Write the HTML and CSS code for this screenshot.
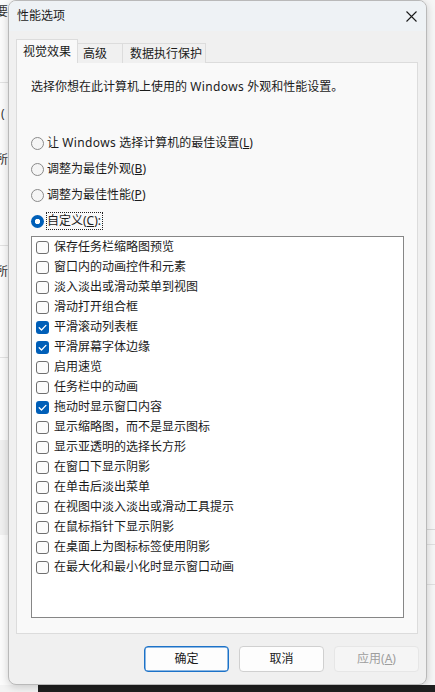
FILE: index.html
```html
<!DOCTYPE html>
<html lang="zh-CN">
<head>
<meta charset="utf-8">
<title>性能选项</title>
<link rel="stylesheet" href="styles.css">
</head>
<body>
<div class="desktop">
  <div class="bgwin">
    <span class="frag frag-1">要</span>
    <span class="frag frag-2">(</span>
    <span class="frag frag-3">所</span>
    <span class="frag frag-4">所</span>
    <div class="bgline bgline-1"></div>
    <div class="bgline bgline-2"></div>
    <div class="bgline bgline-3"></div>
    <div class="bgband"></div>
  </div>
  <div class="rightwin">
    <div class="rline rline-1"></div>
    <div class="rline rline-2"></div>
    <div class="rline rline-3"></div>
  </div>
  <div class="taskbar"></div>

  <div class="dialog">
    <div class="titlebar">
      <span class="title">性能选项</span>
      <span class="close">
        <svg width="11" height="11" viewBox="0 0 11 11"><path d="M0.5 0.5 L10.5 10.5 M10.5 0.5 L0.5 10.5" stroke="#1a1a1a" stroke-width="1.1" fill="none"/></svg>
      </span>
    </div>

    <div class="content">
      <div class="tabs">
        <div class="tab tab-active tab-1">视觉效果</div>
        <div class="tab tab-2">高级</div>
        <div class="tab tab-3">数据执行保护</div>
      </div>
      <div class="panel">
        <p class="desc">选择你想在此计算机上使用的 <span class="lat">Windows</span> 外观和性能设置。</p>
        <div class="radios">
          <div class="radio-row"><span class="radio"></span><span>让 <span class="lat">Windows</span> 选择计算机的最佳设置(<u>L</u>)</span></div>
          <div class="radio-row"><span class="radio"></span><span>调整为最佳外观(<u>B</u>)</span></div>
          <div class="radio-row"><span class="radio"></span><span>调整为最佳性能(<u>P</u>)</span></div>
          <div class="radio-row"><span class="radio radio-on"></span><span class="focus">自定义(<u>C</u>):</span></div>
        </div>
        <div class="list">
          <div class="item"><span class="cb"></span>保存任务栏缩略图预览</div>
          <div class="item"><span class="cb"></span>窗口内的动画控件和元素</div>
          <div class="item"><span class="cb"></span>淡入淡出或滑动菜单到视图</div>
          <div class="item"><span class="cb"></span>滑动打开组合框</div>
          <div class="item"><span class="cb cb-on"><svg width="13" height="13" viewBox="0 0 13 13"><path d="M3.2 6.8 L5.5 9 L9.9 4.4" stroke="#fff" stroke-width="1.3" fill="none" stroke-linecap="round" stroke-linejoin="round"/></svg></span>平滑滚动列表框</div>
          <div class="item"><span class="cb cb-on"><svg width="13" height="13" viewBox="0 0 13 13"><path d="M3.2 6.8 L5.5 9 L9.9 4.4" stroke="#fff" stroke-width="1.3" fill="none" stroke-linecap="round" stroke-linejoin="round"/></svg></span>平滑屏幕字体边缘</div>
          <div class="item"><span class="cb"></span>启用速览</div>
          <div class="item"><span class="cb"></span>任务栏中的动画</div>
          <div class="item"><span class="cb cb-on"><svg width="13" height="13" viewBox="0 0 13 13"><path d="M3.2 6.8 L5.5 9 L9.9 4.4" stroke="#fff" stroke-width="1.3" fill="none" stroke-linecap="round" stroke-linejoin="round"/></svg></span>拖动时显示窗口内容</div>
          <div class="item"><span class="cb"></span>显示缩略图，而不是显示图标</div>
          <div class="item"><span class="cb"></span>显示亚透明的选择长方形</div>
          <div class="item"><span class="cb"></span>在窗口下显示阴影</div>
          <div class="item"><span class="cb"></span>在单击后淡出菜单</div>
          <div class="item"><span class="cb"></span>在视图中淡入淡出或滑动工具提示</div>
          <div class="item"><span class="cb"></span>在鼠标指针下显示阴影</div>
          <div class="item"><span class="cb"></span>在桌面上为图标标签使用阴影</div>
          <div class="item"><span class="cb"></span>在最大化和最小化时显示窗口动画</div>
        </div>
      </div>
    </div>

    <div class="footer">
      <button class="btn btn-primary">确定</button>
      <button class="btn">取消</button>
      <button class="btn btn-disabled">应用(<u>A</u>)</button>
    </div>
  </div>
</div>
</body>
</html>
```

FILE: styles.css
```css
* { box-sizing: border-box; margin: 0; padding: 0; }
html, body { width: 435px; height: 692px; overflow: hidden; }
body {
  font-family: "Noto Sans", "Noto Sans CJK SC", sans-serif;
  font-size: 12px;
  line-height: 16px;
  color: #1b1b1b;
  background: #f3f3f3;
}
.desktop { position: relative; width: 435px; height: 692px; overflow: hidden; }
.lat { letter-spacing: 0.4px; }

/* background windows */
.bgwin { position: absolute; left: 0; top: 0; width: 40px; height: 685px; background: #fbfbfb; }
.frag { position: absolute; font-size: 12px; color: #333; }
.frag-1 { left: -4px; top: 4px; }
.frag-2 { left: 1px; top: 106px; }
.frag-3 { left: -4px; top: 152px; }
.frag-4 { left: -4px; top: 264px; }
.bgline { position: absolute; left: 0; width: 40px; height: 1px; background: #e2e2e2; }
.bgline-1 { top: 82px; }
.bgline-2 { top: 245px; }
.bgline-3 { top: 357px; }
.bgband { position: absolute; left: 0; top: 440px; width: 40px; height: 95px; background: #f0f0f0; }
.rightwin { position: absolute; right: 0; top: 0; width: 12px; height: 685px; background: #f6f6f6; }
.rline { position: absolute; left: 0; right: 0; height: 1px; background: #e0e0e0; }
.rline-1 { top: 529px; background: #d8d8d8; }
.rline-2 { top: 544px; }
.rline-3 { top: 584px; }
.taskbar { position: absolute; left: 38px; right: 0; top: 685px; height: 7px; background: #1f1f1f; }

/* dialog */
.dialog {
  position: absolute;
  left: 8px; top: 0;
  width: 419px; height: 685px;
  border: 1px solid #b9b9b9;
  border-radius: 8px;
  background: #f0f0f0;
  display: flex;
  flex-direction: column;
  overflow: hidden;
  box-shadow: 0 2px 8px rgba(0,0,0,0.18);
}
.titlebar {
  flex: none;
  height: 30px;
  display: flex;
  align-items: center;
  justify-content: space-between;
  padding: 0 9px 0 8px;
  background: #eef2f5;
}
.title { font-size: 12px; color: #1b1b1b; }
.close { display: flex; width: 11px; height: 11px; }

.content { flex: none; padding: 9px 8px 0 7px; }
.tabs { display: flex; align-items: flex-end; height: 23px; margin-bottom: -1px; }
.tab {
  position: relative;
  height: 20px;
  padding: 2px 0 0 0;
  background: #f0f0f0;
  border: 1px solid #dcdcdc;
  border-bottom: none;
  border-left: none;
  color: #1b1b1b;
}
.tab-active {
  z-index: 1;
  height: 24px;
  padding-top: 4px;
  background: #f9f9f9;
  border-left: 1px solid #dcdcdc;
}
.tab-1 { width: 62px; padding-left: 6px; }
.tab-2 { width: 45px; padding-left: 5px; }
.tab-3 { width: 83px; padding-left: 7px; }

.panel {
  width: 402px;
  height: 572px;
  background: #f9f9f9;
  border: 1px solid #dcdcdc;
  padding: 16px 13px 0 14px;
}
.desc { height: 16px; white-space: nowrap; }
.radios { display: flex; flex-direction: column; gap: 10px; margin-top: 40px; }
.radio-row { display: flex; align-items: center; gap: 3px; height: 16px; white-space: nowrap; }
.radio {
  flex: none;
  width: 13px; height: 13px;
  border-radius: 50%;
  border: 1px solid #8a8a8a;
  background: #f5f5f5;
}
.radio-on {
  border: none;
  background: radial-gradient(circle at 50% 50%, #ffffff 0 2.4px, #005fb8 3px);
}
.focus { outline: 1px dotted #222; outline-offset: 0; padding: 0 1px 0 0; line-height: 16px; }
u { text-decoration: underline; text-underline-offset: 1px; }

.list {
  margin-top: 7px;
  width: 373px;
  height: 382px;
  background: #ffffff;
  border: 1px solid #868686;
  padding-left: 4px;
}
.item { display: flex; align-items: center; gap: 5px; height: 20px; white-space: nowrap; }
.cb {
  flex: none;
  width: 13px; height: 13px;
  border: 1px solid #6f6f6f;
  border-radius: 3px;
  background: #fbfbfb;
  display: flex;
}
.cb-on { border: none; background: #005fb8; }

.footer {
  flex: 1;
  display: flex;
  justify-content: flex-end;
  align-items: flex-start;
  gap: 10px;
  padding: 12px 7px 0 0;
}
.btn {
  width: 85px; height: 26px;
  border: 1px solid #d0d0d0;
  border-radius: 4px;
  background: #fdfdfd;
  font: inherit;
  font-size: 12px;
  color: #1b1b1b;
  display: flex; align-items: center; justify-content: center;
}
.btn-primary { border: 1px solid #1c72c8; box-shadow: inset 0 0 0 0.5px #1c72c8; }
.btn-disabled { background: #f5f5f5; border-color: #e6e6e6; color: #9e9e9e; }
```
